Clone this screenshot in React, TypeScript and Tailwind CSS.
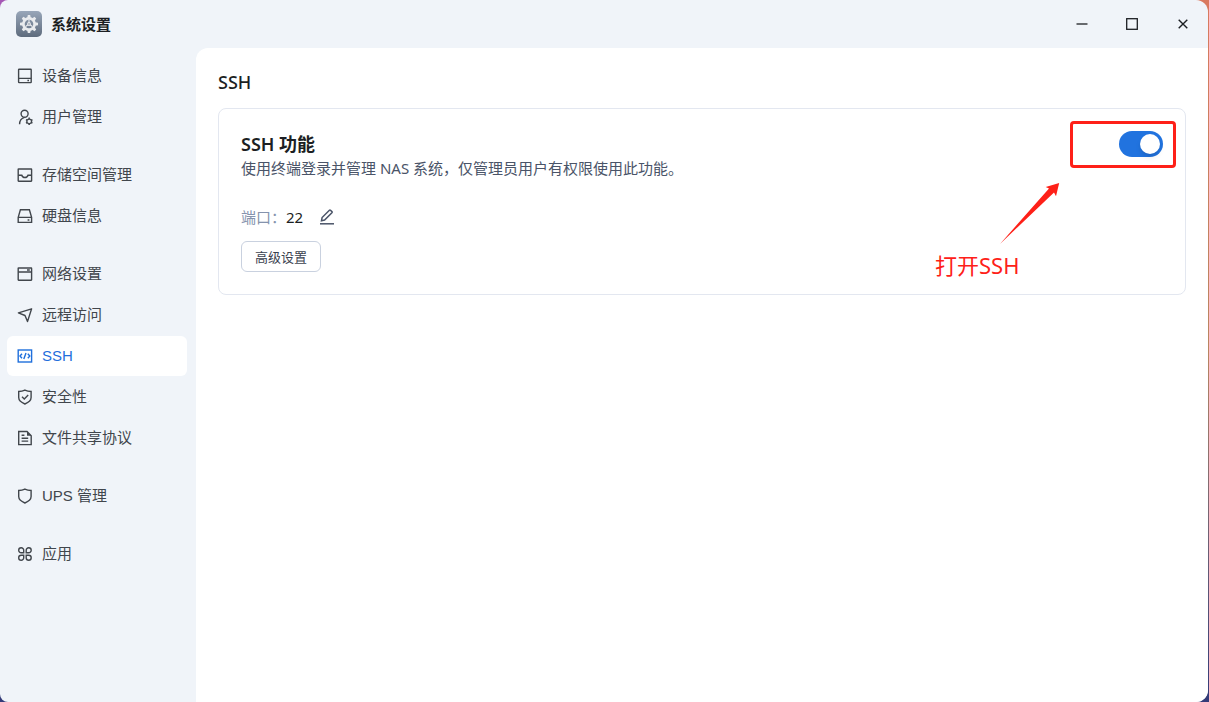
import type { ReactNode } from 'react'
import clsx from 'clsx'

interface NavItem {
  label: string
  icon: ReactNode
  active?: boolean
}

function Icon({ children }: { children: ReactNode }) {
  return (
    <svg
      viewBox="0 0 16 16"
      className="w-4 h-4 flex-shrink-0"
      fill="none"
      stroke="currentColor"
      strokeWidth="1.4"
      aria-hidden="true"
    >
      {children}
    </svg>
  )
}

const NAV_GROUPS: NavItem[][] = [
  [
    {
      label: '设备信息',
      icon: (
        <Icon>
          <rect x="1.6" y="1.2" width="12.6" height="13.4" rx="0.5" />
          <path d="M1.6 10.4h12.6M10.4 12.5h1.6" />
        </Icon>
      ),
    },
    {
      label: '用户管理',
      icon: (
        <Icon>
          <circle cx="7.6" cy="4.8" r="3.5" />
          <path d="M2.6 15.2c0-3.4 1.5-5.8 4.6-6.6" />
          <path d="M12.2 9.8l2.3 1.3v2.6l-2.3 1.3-2.3-1.3v-2.6z" />
          <path d="M12.2 8.6v1.2M12.2 15v1M9 10.6l.9.5M14.5 13.7l.9.5M9 14.2l.9-.5M14.5 11.1l.9-.5" />
        </Icon>
      ),
    },
  ],
  [
    {
      label: '存储空间管理',
      icon: (
        <Icon>
          <rect x="1.2" y="2" width="13.4" height="12.2" rx="0.4" />
          <path d="M1.2 8.2h3.6c.4 1.5 1.5 2.3 3.1 2.3s2.7-.8 3.1-2.3h3.6" />
        </Icon>
      ),
    },
    {
      label: '硬盘信息',
      icon: (
        <Icon>
          <path d="M1.2 9.4L3.4 1.8h9l2.2 7.6v5H1.2zM1.2 9.4h13.4M10.6 12h1.8" />
        </Icon>
      ),
    },
  ],
  [
    {
      label: '网络设置',
      icon: (
        <Icon>
          <rect x="1.2" y="2" width="13.4" height="12.2" rx="0.4" />
          <path d="M1.2 6h13.4M10 4h2.8" />
        </Icon>
      ),
    },
    {
      label: '远程访问',
      icon: (
        <Icon>
          <path d="M14.6 1.8L1.4 5.8l6.6 2.7 2.5 6.1z" strokeLinejoin="round" />
        </Icon>
      ),
    },
    {
      label: 'SSH',
      active: true,
      icon: (
        <Icon>
          <rect x="1.2" y="2" width="13.4" height="12" />
          <path d="M5 5.8L3 8l2 2.2M10.8 5.8l2 2.2-2 2.2M9 5l-2.2 6" />
        </Icon>
      ),
    },
    {
      label: '安全性',
      icon: (
        <Icon>
          <path d="M7.9 1.1c2 1 4 1.4 6.2 1.4v6.1c0 3.2-2.8 5-6.2 6.4-3.4-1.4-6.2-3.2-6.2-6.4V2.5c2.2 0 4.2-.4 6.2-1.4z" />
          <path d="M5 7.7l2.3 2.3 3.9-3.9" />
        </Icon>
      ),
    },
    {
      label: '文件共享协议',
      icon: (
        <Icon>
          <path d="M1.7 1.5h8.3l4.2 4.2v8.9H1.7z" />
          <path d="M10 1.5v4.2h4.2z" fill="currentColor" stroke="none" />
          <path d="M4.6 5.3h2.8M4.6 8.2h6.6M4.6 11.1h6.6" />
        </Icon>
      ),
    },
  ],
  [
    {
      label: 'UPS 管理',
      icon: (
        <Icon>
          <path d="M7.9 1.1c2 1 4 1.4 6.2 1.4v6.1c0 3.2-2.8 5-6.2 6.4-3.4-1.4-6.2-3.2-6.2-6.4V2.5c2.2 0 4.2-.4 6.2-1.4z" />
        </Icon>
      ),
    },
  ],
  [
    {
      label: '应用',
      icon: (
        <Icon>
          <path d="M4.2 1.7a2.5 2.5 0 0 1 2.5 2.5v2.5H4.2a2.5 2.5 0 0 1 0-5zM11.7 1.7a2.5 2.5 0 0 1 0 5H9.2V4.2a2.5 2.5 0 0 1 2.5-2.5zM4.2 9.2h2.5v2.5a2.5 2.5 0 1 1-2.5-2.5zM9.2 9.2h2.5a2.5 2.5 0 1 1-2.5 2.5z" />
        </Icon>
      ),
    },
  ],
]

const GEAR_TEETH = [0, 45, 90, 135, 180, 225, 270, 315]

function AppLogo() {
  return (
    <svg viewBox="0 0 26 26" className="w-[26px] h-[26px]" aria-hidden="true">
      <defs>
        <linearGradient id="logo-bg" x1="0" y1="0" x2="0" y2="1">
          <stop offset="0" stopColor="#98a6b9" />
          <stop offset="1" stopColor="#5e6b7d" />
        </linearGradient>
      </defs>
      <rect width="26" height="26" rx="5" fill="url(#logo-bg)" />
      <g fill="#e9ebee">
        {GEAR_TEETH.map((angle) => (
          <path key={angle} d="M11.2 7l.6-3h2.4l.6 3z" transform={`rotate(${angle} 13 13)`} />
        ))}
      </g>
      <circle cx="13" cy="13" r="5.6" fill="none" stroke="#e9ebee" strokeWidth="2.6" />
      <path d="M13 9v4M13 13l-3.4 2.5M13 13l3.4 2.5" stroke="#e9ebee" strokeWidth="1.1" />
      <circle cx="13" cy="13" r="1.9" fill="#e9ebee" />
      <circle cx="13" cy="13" r="0.8" fill="#7d8a9b" />
    </svg>
  )
}

function TitleBar() {
  return (
    <header className="h-12 flex items-center justify-between pl-4">
      <div className="flex items-center gap-[9px]">
        <AppLogo />
        <h1 className="text-[15px] leading-6 font-bold text-[#1c1f23]">系统设置</h1>
      </div>
      <div className="flex text-[#1c1f23]">
        <button type="button" aria-label="最小化" className="w-[50px] h-12 flex items-center justify-center">
          <svg viewBox="0 0 12 12" className="w-3 h-3" stroke="currentColor" strokeWidth="1.3">
            <path d="M.5 6h11" />
          </svg>
        </button>
        <button type="button" aria-label="最大化" className="w-[50px] h-12 flex items-center justify-center">
          <svg viewBox="0 0 12 12" className="w-3 h-3" fill="none" stroke="currentColor" strokeWidth="1.3">
            <rect x=".7" y=".7" width="10.6" height="10.6" />
          </svg>
        </button>
        <button type="button" aria-label="关闭" className="w-[51px] h-12 flex items-center justify-center">
          <svg viewBox="0 0 12 12" className="w-3 h-3" stroke="currentColor" strokeWidth="1.4">
            <path d="M1.7 1.7l8.6 8.6M10.3 1.7l-8.6 8.6" />
          </svg>
        </button>
      </div>
    </header>
  )
}

function Sidebar() {
  return (
    <nav className="w-[196px] flex-shrink-0 pl-[7px] pr-[9px] pt-2 flex flex-col gap-[18px] font-['Liberation_Sans','Noto_Sans_CJK_SC',sans-serif]">
      {NAV_GROUPS.map((group) => (
        <ul key={group[0].label} className="flex flex-col gap-px">
          {group.map((item) => (
            <li key={item.label}>
              <a
                href="#"
                aria-current={item.active ? 'page' : undefined}
                className={clsx(
                  'h-10 pl-[10px] flex items-center gap-[9px] rounded-md text-[15px] leading-6',
                  item.active ? 'bg-white text-[#1f6fdc]' : 'text-[#41464c]',
                )}
              >
                {item.icon}
                {item.label}
              </a>
            </li>
          ))}
        </ul>
      ))}
    </nav>
  )
}

// Red marker, arrow and note pointing at the switch
function Annotation() {
  return (
    <div className="absolute top-3 right-[9px] w-[241px] pointer-events-none">
      <div className="ml-auto w-[106px] h-[47px] border-3 border-[#fe2018] rounded-[4px]" />
      <svg viewBox="0 0 60 62" className="ml-[65px] mt-[14px] w-[60px] h-[62px]" fill="#fe2018" aria-hidden="true">
        <path d="M0 62L49 6.4 45.7 5 59.2 1 56 14.2l-2-3.6z" />
      </svg>
      <p className="mt-[5px] text-[22px] leading-8 text-[#fe2018]">打开SSH</p>
    </div>
  )
}

function SshCard() {
  return (
    <section className="relative border border-[#e3e7f0] rounded-lg p-[22px]">
      <div className="flex items-start justify-between">
        <div>
          <h3 id="ssh-label" className="text-[18px] leading-[26px] font-semibold text-[#1c1f23]">
            SSH 功能
          </h3>
          <p className="text-[15px] leading-[22px] text-[#4a5468]">
            使用终端登录并管理 NAS 系统，仅管理员用户有权限使用此功能。
          </p>
        </div>
        <label className="relative flex w-11 h-[26px] flex-shrink-0">
          <input
            type="checkbox"
            role="switch"
            defaultChecked
            aria-labelledby="ssh-label"
            className="peer appearance-none w-full h-full rounded-full bg-[#c5cbd6] checked:bg-[#2173df]"
          />
          <span className="absolute top-[3px] left-[3px] w-5 h-5 rounded-full bg-white shadow-md peer-checked:left-[21px]" />
        </label>
      </div>

      <div className="mt-[26px] h-6 flex items-center text-[15px] leading-6">
        <span className="text-[#8593ad]">端口：</span>
        <span className="text-[#1c1f23]">22</span>
        <button type="button" aria-label="编辑端口" className="ml-4 text-[#4a5468]">
          <svg viewBox="0 0 16 16" className="w-4 h-4" fill="none" stroke="currentColor" strokeWidth="1.5">
            <path d="M2.5 11.7l.6-3.2 7.3-7.3a.8.8 0 0 1 1.1 0l1.4 1.4a.8.8 0 0 1 0 1.1L5.6 11z" />
            <path d="M1 14.8h14" />
          </svg>
        </button>
      </div>

      <button
        type="button"
        className="mt-3 h-[31px] px-[13px] flex items-center border border-[#c9d1df] rounded-md text-[13px] leading-5 text-[#3b4250]"
      >
        高级设置
      </button>

      <Annotation />
    </section>
  )
}

export default function App() {
  return (
    <div className="relative min-h-screen flex pr-px bg-linear-to-b from-[#d9795f] via-[#b98560] to-[#333a78] font-['Noto_Sans','Noto_Sans_CJK_SC',sans-serif]">
      <div className="absolute top-0 left-0 w-3 h-3 bg-[#a557b5]" />
      <div className="relative flex-1 flex flex-col rounded-l-lg rounded-r-xl bg-[#f0f4f9]">
        <TitleBar />
        <div className="flex-1 flex">
          <Sidebar />
          <main className="flex-1 bg-white rounded-tl-xl rounded-br-xl px-[22px] pt-5">
            <h2 className="mb-3 text-[18px] leading-7 font-medium text-[#1c1f23]">SSH</h2>
            <SshCard />
          </main>
        </div>
      </div>
    </div>
  )
}
